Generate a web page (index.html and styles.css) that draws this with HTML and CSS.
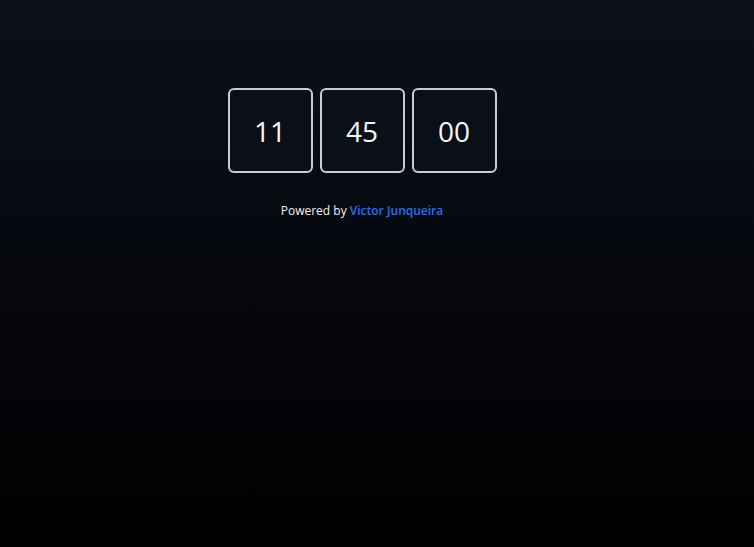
FILE: index.html
```html
<!DOCTYPE html>
<html>
<head>
<meta charset="utf-8">
<link rel="stylesheet" href="styles.css">
</head>
<body>
<main class="page">
  <div class="clock">
    <div class="cell">11</div>
    <div class="cell">45</div>
    <div class="cell">00</div>
  </div>
  <p class="credit">Powered by <a class="link" href="#">Victor Junqueira</a></p>
</main>
</body>
</html>
```
FILE: styles.css
```css
html, body {
  margin: 0;
  height: 100%;
}
body {
  background: linear-gradient(to bottom, #0b101b 0%, #05070c 55%, #000000 100%);
  font-family: "Open Sans", "Noto Sans", sans-serif;
  color: #ffffff;
}
.page {
  display: flex;
  flex-direction: column;
  align-items: center;
  padding: 88px 30px 0 0;
}
.clock {
  display: flex;
  gap: 7px;
}
.cell {
  width: 81px;
  height: 81px;
  border: 2px solid #c9ccd2;
  border-radius: 6px;
  display: flex;
  align-items: center;
  justify-content: center;
  font-size: 28px;
  color: #f2f6ff;
  background: #0b0f18;
}
.credit {
  margin: 29px 0 0 0;
  font-size: 12px;
  color: #f0f0f0;
}
.link {
  color: #2b6ff0;
  font-weight: 600;
  text-decoration: none;
}
```
